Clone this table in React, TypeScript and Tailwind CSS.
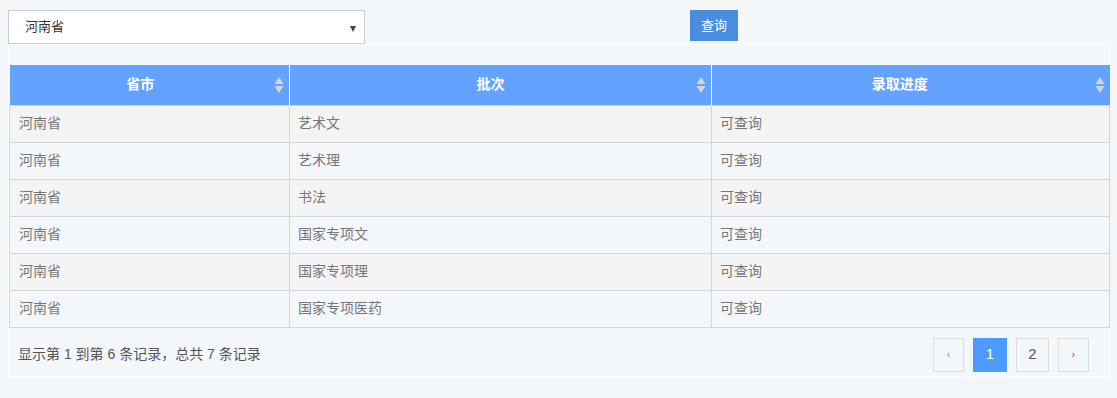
import React from 'react';

const rows = [
  { province: '河南省', batch: '艺术文', status: '可查询' },
  { province: '河南省', batch: '艺术理', status: '可查询' },
  { province: '河南省', batch: '书法', status: '可查询' },
  { province: '河南省', batch: '国家专项文', status: '可查询' },
  { province: '河南省', batch: '国家专项理', status: '可查询' },
  { province: '河南省', batch: '国家专项医药', status: '可查询' },
];

function SortIcon() {
  return (
    <svg
      className="absolute right-[5px] top-1/2 -translate-y-1/2"
      width="10"
      height="16"
      viewBox="0 0 10 16"
    >
      <path d="M5 0 L9.5 7 L0.5 7 Z" fill="#d3d3d3" />
      <path d="M0.5 9 L9.5 9 L5 16 Z" fill="#d3d3d3" />
    </svg>
  );
}

export default function App() {
  const font = { fontFamily: '"Helvetica Neue", Helvetica, Arial, "Noto Sans CJK SC", sans-serif' };

  return (
    <div
      className="bg-[#f4f7fa] w-full h-[398px] px-[8px] pt-[10px] text-[13px] text-[#333]"
      style={font}
    >
      <div className="flex items-start">
        <div className="relative w-[357px] h-[34px] bg-white border border-[#ccc] flex items-center pl-[16px]">
          <span className="text-[13px] text-[#333]">河南省</span>
          <span className="absolute right-[8px] top-[15px] w-0 h-0 border-l-[3.5px] border-r-[3.5px] border-t-[6px] border-l-transparent border-r-transparent border-t-[#444]"></span>
        </div>
        <button className="ml-[325px] w-[48px] h-[31px] bg-[#4a8cdd] text-white text-[13px] flex items-center justify-center">
          查询
        </button>
      </div>

      <div className="w-[1102px] border border-white pt-[20px]">
        <table className="w-full border-collapse table-fixed text-[14px]">
          <colgroup>
            <col className="w-[280px]" />
            <col className="w-[422px]" />
            <col className="w-[398px]" />
          </colgroup>
          <thead>
            <tr className="h-[40px] bg-[#63a3ff]">
              <th className="relative text-white font-bold text-center border-r border-white p-0 pr-[18px]">
                省市
                <SortIcon />
              </th>
              <th className="relative text-white font-bold text-center border-r border-white p-0 pr-[20px]">
                批次
                <SortIcon />
              </th>
              <th className="relative text-white font-bold text-center p-0 pr-[22px]">
                录取进度
                <SortIcon />
              </th>
            </tr>
          </thead>
          <tbody>
            {rows.map((r, i) => (
              <tr
                key={i}
                className={`h-[37px] ${i % 2 === 0 ? 'bg-[#f4f4f4]' : 'bg-[#f4f7fa]'}`}
              >
                <td className="border border-[#d6d6d6] pl-[9px] text-[#777]">{r.province}</td>
                <td className="border border-[#d6d6d6] pl-[8px] text-[#777]">{r.batch}</td>
                <td className="border border-[#d6d6d6] pl-[8px] text-[#777]">{r.status}</td>
              </tr>
            ))}
          </tbody>
        </table>

        <div className="flex items-center justify-between pl-[9px] pr-[20px] pt-[10px] pb-[5px]">
          <span className="text-[14px] text-[#555]">显示第 1 到第 6 条记录，总共 7 条记录</span>
          <div className="flex items-center gap-[9px]">
            <div className="w-[31px] h-[34px] border border-[#ddd] flex items-center justify-center text-[10px] text-[#777]">
              ‹
            </div>
            <div className="w-[34px] h-[34px] bg-[#4d9bff] border border-[#4d9bff] flex items-center justify-center text-[15px] text-white">
              1
            </div>
            <div className="w-[33px] h-[34px] border border-[#ddd] flex items-center justify-center text-[15px] text-[#555]">
              2
            </div>
            <div className="w-[31px] h-[34px] border border-[#ddd] flex items-center justify-center text-[10px] text-[#c0392b]">
              ›
            </div>
          </div>
        </div>
      </div>
    </div>
  );
}
